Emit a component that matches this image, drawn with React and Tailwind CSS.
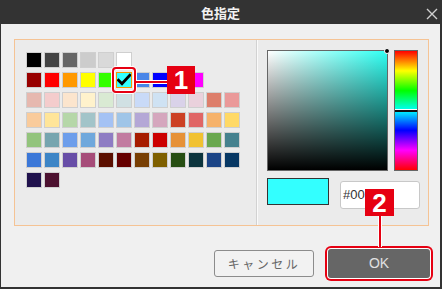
import React from "react";

const ROW1 = ["#000000", "#434343", "#666666", "#cccccc", "#d9d9d9", "#ffffff"];
const ROW2 = ["#980000", "#ff0000", "#ff9900", "#ffff00", "#33ff00", "CHECK", "#4a86e8", "#0000ff", "#9900ff", "#ff00ff"];
const REST = [
  "#e6b8af", "#f4cccc", "#fce5cd", "#fff2cc", "#d9ead3", "#d0e0e3", "#c9daf8", "#cfe2f3", "#d9d2e9", "#ead1dc",
  "#dd7e6b", "#ea9999", "#f9cb9c", "#ffe599", "#b6d7a8", "#a2c4c9", "#a4c2f4", "#9fc5e8", "#b4a7d6", "#d5a6bd",
  "#cc4125", "#e06666", "#f6b26b", "#ffd966", "#93c47d", "#76a5af", "#6d9eeb", "#6fa8dc", "#8e7cc3", "#c27ba0",
  "#a61c00", "#cc0000", "#e69138", "#f1c232", "#6aa84f", "#45818e", "#3c78d8", "#3d85c6", "#674ea7", "#a64d79",
  "#5b0f00", "#660000", "#783f04", "#7f6000", "#274e13", "#0c343d", "#1c4587", "#073763", "#20124d", "#4c1130",
];

const rows = [ROW1, ROW2];
for (let i = 0; i < REST.length; i += 12) rows.push(REST.slice(i, i + 12));

function Swatch({ c }) {
  if (c === "CHECK") {
    return (
      <div className="w-[16px] h-[16px] border border-[#f39800] bg-[#33ffff] flex items-center justify-center">
        <svg width="14" height="14" viewBox="0 0 14 14">
          <path d="M1.5 7.2 L5 10.8 L12.8 2.2" fill="none" stroke="#000" strokeWidth="2.8" strokeLinecap="square" strokeLinejoin="miter" />
        </svg>
      </div>
    );
  }
  return <div className="w-[16px] h-[16px] border border-[#cfcfcf]" style={{ backgroundColor: c }} />;
}

export default function App() {
  return (
    <div
      className="relative w-[442px] h-[289px] bg-[#f0f0f0] border-l border-r-2 border-b-2 border-[#333333] flex flex-col"
      style={{ fontFamily: '"Noto Sans CJK JP", "Noto Sans", sans-serif' }}
    >
      {/* title bar */}
      <div className="relative h-[24px] bg-[#333333] flex items-center justify-center">
        <span className="text-[13px] font-bold text-[#f2f2f2] leading-none">色指定</span>
        <svg className="absolute right-[2px] top-[8px]" width="12" height="12" viewBox="0 0 12 12">
          <path d="M1 1 L11 11 M11 1 L1 11" stroke="#cfcfcf" strokeWidth="1.4" fill="none" />
        </svg>
      </div>

      {/* body */}
      <div className="pt-[15px] pl-[13px]">
        <div className="w-[415px] h-[187px] border border-[#f5c394] bg-[#ebebeb] flex">
          {/* swatches */}
          <div className="w-[241px] pt-[12px] pl-[11px] flex flex-col gap-[4px]">
            {rows.map((r, i) => (
              <div key={i} className="flex gap-[2px]">
                {r.map((c, j) => (
                  <Swatch key={j} c={c} />
                ))}
              </div>
            ))}
          </div>
          {/* divider */}
          <div className="w-[2px] border-l border-[#d2d2d2] bg-[#fafafa]" />
          {/* picker */}
          <div className="flex-1 pt-[10px] pl-[9px]">
            <div className="flex gap-[6px]">
              <div className="relative w-[121px] h-[121px] border border-[#666666] bg-[linear-gradient(to_top,#000,rgba(0,0,0,0)),linear-gradient(to_right,#fff,#2ffff2)]">
                <div className="absolute left-[116px] top-[-3px] w-[6px] h-[6px] rounded-full bg-black border border-white" />
              </div>
              <div className="relative w-[24px] h-[121px] border border-[#666666] bg-[linear-gradient(to_bottom,#f00,#ff0,#0f0,#0ff,#00f,#f0f,#f00)]">
                <div className="absolute left-0 right-0 top-[59px] h-[2px] bg-[#111] shadow-[0_-1px_0_#fff]" />
              </div>
            </div>
            <div className="mt-[7px] flex items-start gap-[11px]">
              <div className="w-[62px] h-[27px] border border-[#333333] bg-[#33ffff]" />
              <div
                className="mt-[3px] w-[80px] h-[28px] bg-white border border-[#c8c8c8] rounded-[3px] flex items-center pl-[2px] text-[13px] text-[#333333]"
                style={{ fontFamily: '"Liberation Sans", Arial, sans-serif' }}
              >
                #00
              </div>
            </div>
          </div>
        </div>
      </div>

      {/* buttons */}
      <div className="mt-[23px] flex justify-end items-center gap-[14px] pr-[10px]">
        <div className="w-[100px] h-[27px] border border-[#8c8c8c] rounded-[3px] bg-[#f2f2f2] flex items-center justify-center text-[12px] tracking-[2.5px] text-[#666666]">
          キャンセル
        </div>
        <div
          className="w-[102px] h-[29px] rounded-[3px] bg-[#666666] flex items-center justify-center text-[14px] text-[#e0e0e0] shadow-[0_0_0_1px_#fff,0_0_0_3px_#e60012]"
          style={{ fontFamily: '"Liberation Sans", Arial, sans-serif' }}
        >
          OK
        </div>
      </div>

      {/* annotation 1 */}
      <div className="absolute left-[111px] top-[67px] w-[24px] h-[26px] rounded-[4px] border-2 border-[#e60012] shadow-[0_0_0_1px_#fff,inset_0_0_0_1px_#fff]" />
      <div className="absolute left-[135px] top-[80px] w-[32px] h-[4px] bg-[#e60012] border-y border-white" />
      <div
        className="absolute left-[166px] top-[66px] w-[28px] h-[28px] bg-[#e60012] flex items-center justify-center text-white text-[26px] font-bold leading-none"
        style={{ fontFamily: '"Liberation Sans", Arial, sans-serif' }}
      >
        1
      </div>

      {/* annotation 2 */}
      <div className="absolute left-[377px] top-[215px] w-[4px] h-[32px] bg-[#e60012] border-x border-white" />
      <div
        className="absolute left-[364px] top-[189px] w-[29px] h-[27px] bg-[#e60012] flex items-center justify-center text-white text-[26px] font-bold leading-none"
        style={{ fontFamily: '"Liberation Sans", Arial, sans-serif' }}
      >
        2
      </div>
    </div>
  );
}
